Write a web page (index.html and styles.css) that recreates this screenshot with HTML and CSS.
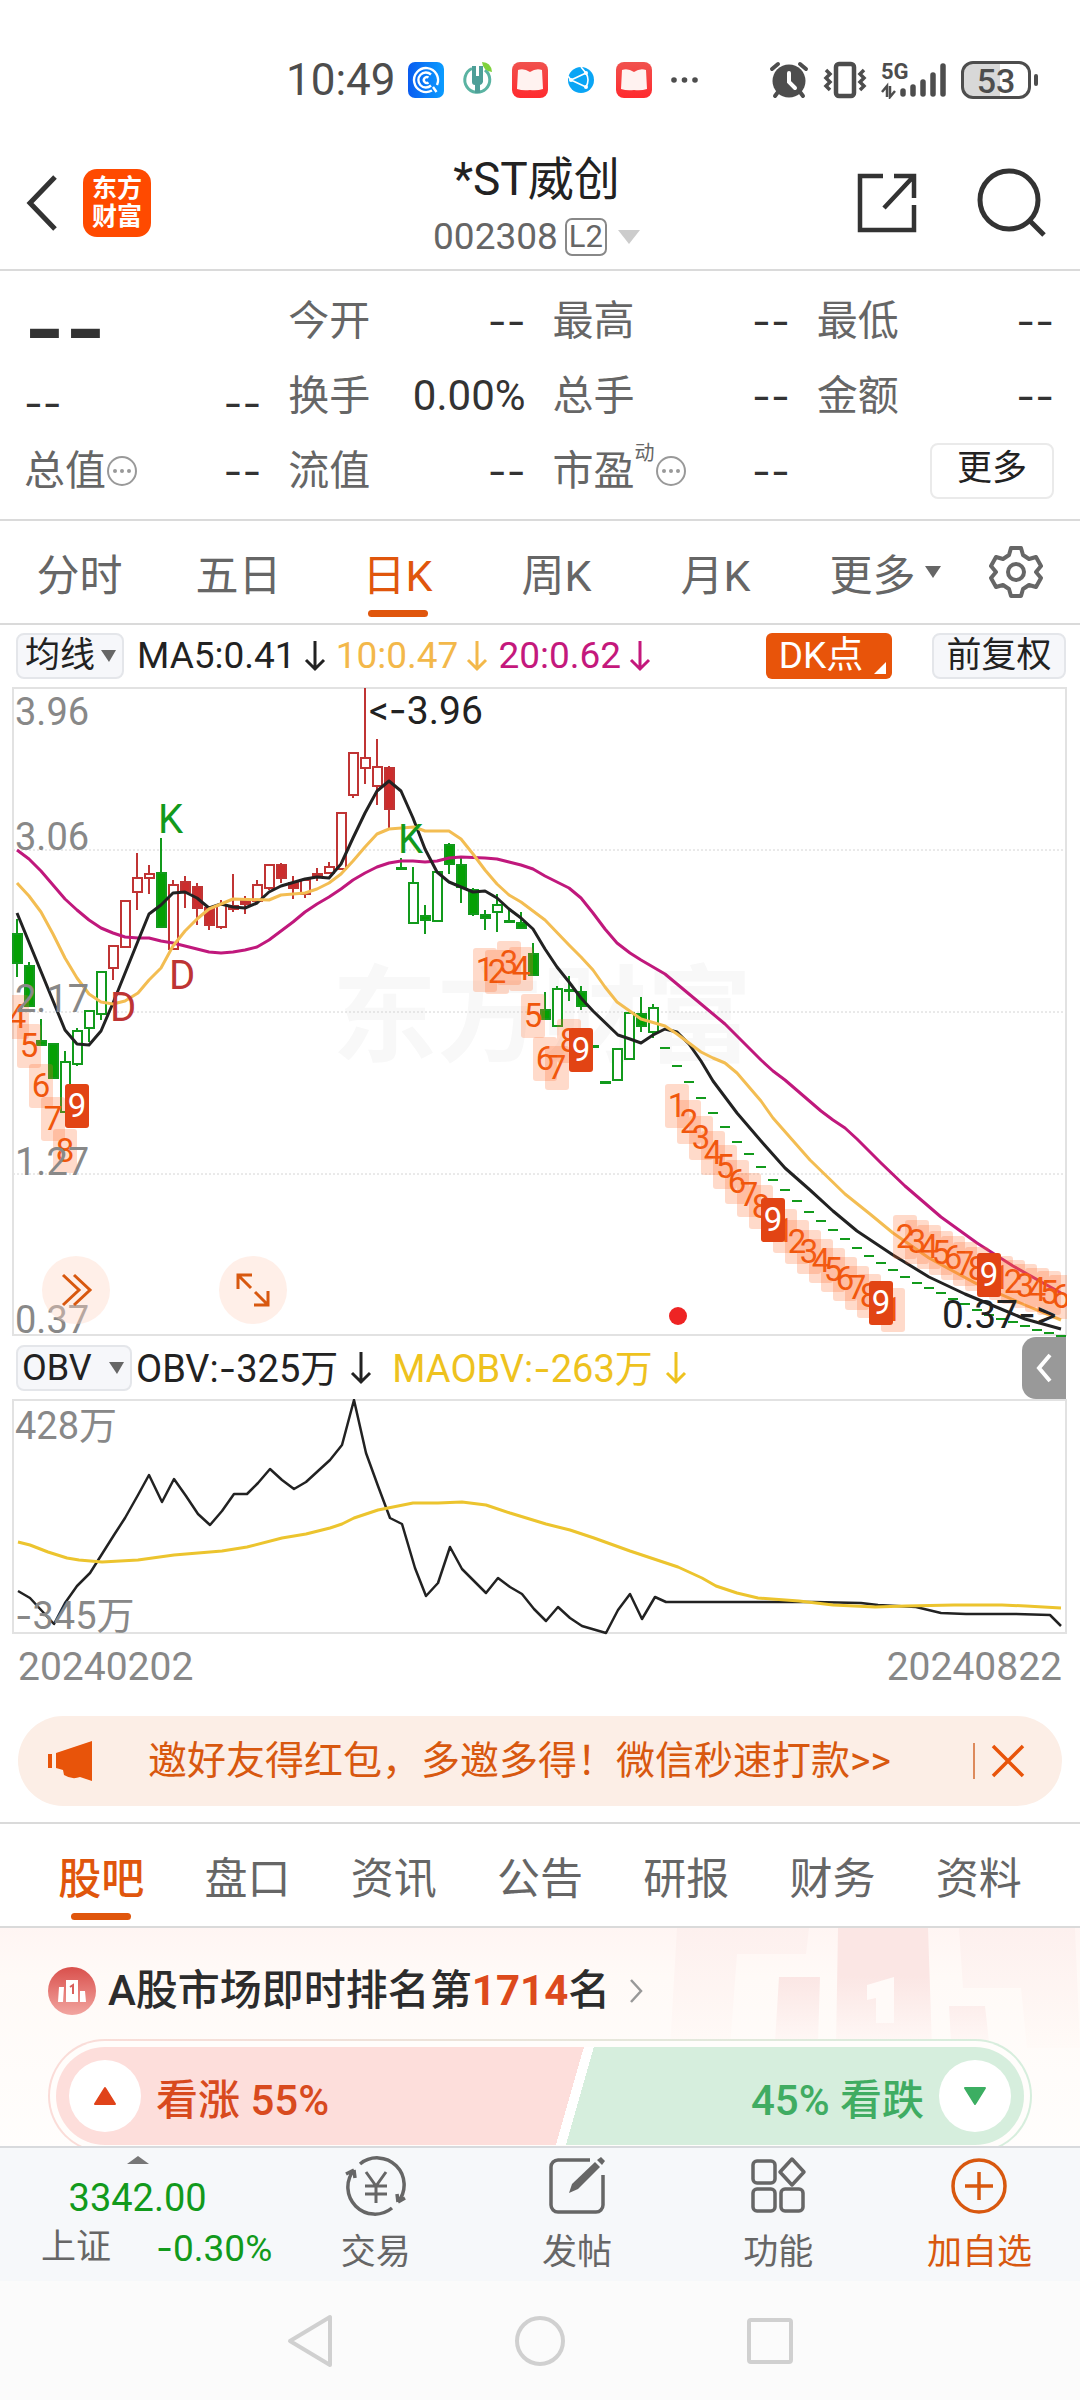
FILE: index.html
```html
<!DOCTYPE html>
<html lang="zh-CN">
<head>
<meta charset="utf-8">
<meta name="viewport" content="width=device-width, initial-scale=1">
<title>*ST威创 002308</title>
<link rel="stylesheet" href="styles.css">
</head>
<body>
<div class="app">
  <div class="status">
    <span class="status-time">10:49</span>
    <svg class="status-app" viewBox="0 0 52 36"><defs><linearGradient id="gb" x1="0" x2="1"><stop offset="0" stop-color="#0a5cf0"/><stop offset="1" stop-color="#0a9cff"/></linearGradient><linearGradient id="gr" x1="0" x2="0" y1="0" y2="1"><stop offset="0" stop-color="#f0524e"/><stop offset="1" stop-color="#ff2a2e"/></linearGradient></defs><rect x="8" width="36" height="36" rx="7" fill="url(#gb)"/><g fill="none" stroke="#fff" stroke-width="2.4"><path d="M32 28.5A12 12 0 1 1 37 23M33 25l3.500 5"/><path d="M31 12.500A7.500 7.500 0 1 0 31 23.500"/><path d="M28.500 15.500A3 3 0 1 0 28.500 20.500"/></g></svg>
    <svg class="status-app" viewBox="0 0 52 36"><g fill="none" stroke="#5ab3a2" stroke-width="3"><path d="M20 6.500A12.500 12.500 0 1 0 33 8"/></g><path d="M20 4h4v10h3V4h4v10v6q-1 3-3 3v8h-5v-8q-3 0-3-3z" fill="#4e9f98"/><path d="M30 0q9 0 10 10q-9-1-10-10z" fill="#7fd23c"/></svg>
    <svg class="status-app" viewBox="0 0 52 36"><rect x="8" width="36" height="36" rx="8" fill="url(#gr)"/><path d="M14 8q6-2 12 2q6-4 12-2l1 19q-6 2-13 1q-7 1-13-1z" fill="#fff2f0"/></svg>
    <svg class="status-app" viewBox="0 0 52 36"><circle cx="25" cy="18" r="13" fill="#0aa5f5"/><g stroke="#fff" stroke-width="1.600" fill="none"><path d="M15 18L30 11M15 18L30 25M30 11q4 7 0 14M30 11L25 5M15 18l-3-4"/></g><g fill="#fff"><circle cx="30" cy="11" r="2"/><circle cx="15" cy="18" r="2"/><circle cx="30" cy="25" r="2"/></g></svg>
    <svg class="status-app" viewBox="0 0 52 36"><rect x="8" width="36" height="36" rx="8" fill="url(#gr)"/><path d="M14 8q6-2 12 2q6-4 12-2l1 19q-6 2-13 1q-7 1-13-1z" fill="#fff2f0"/></svg>
    <svg class="status-app" viewBox="0 0 52 36" fill="#4d4d4d"><circle cx="14" cy="18" r="2.800"/><circle cx="24.500" cy="18" r="2.800"/><circle cx="35" cy="18" r="2.800"/></svg>
    <div class="status-right">
      <svg width="40" height="38" viewBox="0 0 40 38"><circle cx="20" cy="20" r="16.500" fill="#4d4d4d"/><g stroke="#4d4d4d" stroke-width="4" stroke-linecap="round"><path d="M3 8L9 3M37 8L31 3M9 31L6 35M31 31L34 35"/></g><path d="M20 12v9l6 6" fill="none" stroke="#fff" stroke-width="4" stroke-linecap="round"/></svg>
      <svg width="44" height="38" viewBox="0 0 44 38" fill="none" stroke="#4d4d4d"><rect x="13" y="3" width="18" height="32" rx="3" stroke-width="4.500"/><path d="M3 9l4 4l-4 4l4 4l-4 4l4 4M41 9l-4 4l4 4l-4 4l4 4l-4 4" stroke-width="3.500"/></svg>
      <div class="signal"><span class="signal-net">5G</span><svg width="66" height="38" viewBox="0 0 66 38"><g stroke="#4d4d4d" stroke-width="5.500" stroke-linecap="round"><path d="M22 30v3M32 26v7M42 21v12M52 14v19M62 5v28"/></g><path d="M1 31l5-6v11M9 25v11l5-6" fill="none" stroke="#4d4d4d" stroke-width="2.500"/></svg></div>
      <div class="battery"><span>53</span></div>
    </div>
  </div>

  <main class="page">
    <header class="top">
      <div class="top-left">
        <button class="icon-btn" aria-label="返回"><svg width="34" height="60" viewBox="0 0 34 60"><path d="M30 4L5 30L30 56" fill="none" stroke="#333" stroke-width="5"/></svg></button>
        <div class="logo"><span>东方</span><span>财富</span></div>
      </div>
      <div class="top-title">
        <h1>*ST威创</h1>
        <div class="code"><span>002308</span><span class="level">L2</span><svg width="22" height="14" viewBox="0 0 22 14"><path d="M0 0h22L11 14z" fill="#ccc"/></svg></div>
      </div>
      <div class="top-right">
        <button class="icon-btn" aria-label="分享"><svg width="62" height="62" viewBox="0 0 62 62" fill="none" stroke="#333" stroke-width="4.500"><path d="M27 4H4v54h54V33M38 4h20v22M57 5L28 36"/></svg></button>
        <button class="icon-btn" aria-label="搜索"><svg width="72" height="72" viewBox="0 0 72 72" fill="none" stroke="#333" stroke-width="5"><circle cx="33" cy="33" r="29"/><path d="M54 54L68 68"/></svg></button>
      </div>
    </header>

    <section class="quote">
      <div class="quote-last">
        <strong class="dash dash-big">--</strong>
        <div class="cell"><span class="dash">--</span><span class="dash">--</span></div>
      </div>
      <div class="cell"><span>今开</span><span class="dash">--</span></div>
      <div class="cell"><span>最高</span><span class="dash">--</span></div>
      <div class="cell"><span>最低</span><span class="dash">--</span></div>
      <div class="cell"><span>换手</span><span class="value">0.00%</span></div>
      <div class="cell"><span>总手</span><span class="dash">--</span></div>
      <div class="cell"><span>金额</span><span class="dash">--</span></div>
      <div class="cell"><span class="with-info">总值<button class="icon-btn" aria-label="说明"><svg width="32" height="32" viewBox="0 0 32 32"><circle cx="16" cy="16" r="14" fill="none" stroke="#999" stroke-width="2"/><g fill="#999"><circle cx="9" cy="16" r="2"/><circle cx="16" cy="16" r="2"/><circle cx="23" cy="16" r="2"/></g></svg></button></span><span class="dash">--</span></div>
      <div class="cell"><span>流值</span><span class="dash">--</span></div>
      <div class="cell"><span class="with-info">市盈<sup>动</sup><button class="icon-btn" aria-label="说明"><svg width="32" height="32" viewBox="0 0 32 32"><circle cx="16" cy="16" r="14" fill="none" stroke="#999" stroke-width="2"/><g fill="#999"><circle cx="9" cy="16" r="2"/><circle cx="16" cy="16" r="2"/><circle cx="23" cy="16" r="2"/></g></svg></button></span><span class="dash">--</span></div>
      <div class="cell cell-more"><button class="more">更多</button></div>
    </section>

    <nav class="periods">
      <button class="tab">分时</button>
      <button class="tab">五日</button>
      <button class="tab active">日K</button>
      <button class="tab">周K</button>
      <button class="tab">月K</button>
      <button class="tab tab-more">更多<svg width="16" height="12" viewBox="0 0 16 12"><path d="M0 0h16L8 12z" fill="#666"/></svg></button>
      <button class="icon-btn" aria-label="设置"><svg width="54" height="54" viewBox="0 0 54 54" fill="none" stroke="#666" stroke-width="4"><path d="M22 3h10l2 7l6 4l7-2l5 9l-5 6l5 6l-5 9l-7-2l-6 4l-2 7H22l-2-7l-6-4l-7 2l-5-9l5-6l-5-6l5-9l7 2l6-4z" stroke-linejoin="round"/><circle cx="27" cy="27" r="8"/></svg></button>
    </nav>

    <div class="legend">
      <div class="picker picker-ma"><select aria-label="主图指标"><option>均线</option></select><svg width="15" height="12" viewBox="0 0 15 12"><path d="M0 0h15L8 12z" fill="#666"/></svg></div>
      <span class="read ma">MA5:0.41<svg width="22" height="32" viewBox="0 0 22 32"><path d="M11 1v28M2 20l9 9l9-9"/></svg></span>
      <span class="read ma ma10">10:0.47<svg width="22" height="32" viewBox="0 0 22 32"><path d="M11 1v28M2 20l9 9l9-9"/></svg></span>
      <span class="read ma ma20">20:0.62<svg width="22" height="32" viewBox="0 0 22 32"><path d="M11 1v28M2 20l9 9l9-9"/></svg></span>
      <button class="dk">DK点<svg width="12" height="12" viewBox="0 0 12 12"><path d="M12 0v12H0z" fill="#fff"/></svg></button>
      <button class="chip">前复权</button>
    </div>

    <div class="chart">
      <svg class="plot" viewBox="0 686 1080 650">
        <defs><clipPath id="area"><rect x="12" y="686" width="1055" height="650"/></clipPath></defs>
        <text class="watermark" x="332" y="1052">东方财富</text>
        <g class="grid"><path d="M13 849H1066M13 1011H1066M13 1173H1066"/></g>
        <rect class="frame" x="13" y="687" width="1053" height="647"/>
        <g clip-path="url(#area)">
          <g id="candles"></g>
          <polyline class="line l20" points="17,849 29,858 41,870 53,884 65,898 77,909 89,919 101,927 113,932 125,936 138,937 149,937 161,940 173,942 185,945 197,948 209,951 221,952 233,951 245,949 257,946 269,939 281,930 293,921 305,911 317,903 329,896 341,888 353,879 365,872 377,866 389,862 401,860 413,860 425,861 437,860 449,857 461,856 485,857 497,858 509,861 521,864 533,868 545,875 557,881 569,887 581,897 593,912 605,928 617,942 630,952 641,959 665,973 677,983 701,1003 725,1023 761,1059 773,1070 785,1079 821,1110 833,1119 845,1127 857,1138 881,1162 905,1185 941,1216 977,1242 1013,1265 1061,1292"/>
          <polyline class="line l5" points="17,912 65,1029 77,1043 89,1044 101,1030 113,1002 138,940 149,913 161,904 173,892 185,891 197,897 209,907 221,903 233,906 245,907 257,902 269,891 281,885 305,878 317,876 329,877 341,863 353,837 365,812 377,790 389,780 401,790 413,817 425,848 437,871 449,881 461,886 473,891 485,890 497,897 509,908 521,917 533,928 545,948 557,966 569,981 581,997 593,1010 618,1034 630,1038 641,1042 653,1034 665,1028 677,1031 689,1043 701,1060 713,1080 737,1112 761,1140 785,1167 810,1189 833,1210 857,1230 893,1254 929,1276 965,1293 1001,1308 1025,1318 1061,1328"/>
          <polyline class="line l10" points="17,882 29,895 41,911 53,933 65,957 77,977 89,993 101,1001 113,1003 125,1000 138,992 149,979 161,967 173,945 185,930 197,918 209,908 221,903 233,898 269,899 281,894 305,892 317,888 329,882 341,873 353,860 365,846 377,833 389,828 414,826 425,830 449,830 461,838 473,853 485,869 497,883 509,894 521,901 533,910 545,919 569,944 581,956 593,969 605,986 617,1001 641,1018 665,1025 677,1033 701,1051 713,1057 725,1062 737,1072 761,1100 773,1117 810,1159 845,1193 870,1213 893,1232 929,1257 977,1283 1025,1304 1061,1319"/>
          <g id="counts"></g>
        </g>
        <g class="mark buy"><text x="158" y="832">K</text><text x="398" y="852">K</text></g>
        <g class="mark sell"><text x="169" y="988">D</text><text x="110" y="1020">D</text></g>
        <g class="axis"><text x="15" y="724">3.96</text><text x="15" y="849">3.06</text><text x="15" y="1011">2.17</text><text x="15" y="1174">1.27</text><text x="15" y="1332">0.37</text></g>
        <text class="note" x="369" y="723">&lt;<tspan class="wide">-</tspan>3.96</text>
        <text class="note" x="942" y="1327">0.37<tspan class="wide">-</tspan>&gt;</text>
        <circle cx="678" cy="1315" r="9" fill="#ee2424"/>
      </svg>
      <button class="float float-next" aria-label="快进"><svg width="34" height="36" viewBox="0 0 34 36"><path d="M4 3l16 15L4 33M15 3l16 15L15 33"/></svg></button>
      <button class="float float-full" aria-label="全屏"><svg width="36" height="36" viewBox="0 0 36 36"><path d="M3 17V3h14M3 3l13 13M33 19v14H19M33 33L20 20"/></svg></button>
    </div>

    <div class="legend">
      <div class="picker picker-obv"><select aria-label="副图指标"><option>OBV</option></select><svg width="15" height="12" viewBox="0 0 15 12"><path d="M0 0h15L8 12z" fill="#666"/></svg></div>
      <span class="read obv"><span>OBV:<span class="wide">-</span>325万</span><svg width="22" height="34" viewBox="0 0 22 34"><path d="M11 1v30M2 22l9 9l9-9"/></svg></span>
      <span class="read maobv"><span>MAOBV:<span class="wide">-</span>263万</span><svg width="22" height="34" viewBox="0 0 22 34"><path d="M11 1v30M2 22l9 9l9-9"/></svg></span>
      <button class="drawer" aria-label="展开"><svg width="18" height="32" viewBox="0 0 18 32"><path d="M15 3L4 16L15 29" fill="none" stroke="#fff" stroke-width="4"/></svg></button>
    </div>

    <svg class="plot" viewBox="0 1398 1080 236">
      <rect class="frame" x="13" y="1399" width="1053" height="233"/>
      <polyline class="line thin l5" points="18,1590 30,1597 54,1623 65,1602 77,1585 90,1572 102,1553 114,1534 125,1517 138,1494 149,1474 162,1501 174,1478 186,1495 198,1513 210,1524 222,1510 234,1493 247,1493 258,1482 270,1468 282,1479 294,1488 306,1481 318,1470 330,1459 342,1444 354,1399 366,1452 378,1485 390,1517 402,1523 415,1567 426,1595 438,1582 450,1546 462,1568 474,1580 486,1592 498,1577 510,1586 522,1593 534,1608 546,1620 558,1606 570,1617 582,1625 606,1632 618,1609 630,1593 642,1618 655,1596 666,1601 813,1601 861,1602 878,1604 916,1606 941,1612 966,1613 1014,1613 1050,1614 1061,1625"/>
      <polyline class="line lobv" points="18,1541 30,1544 48,1551 67,1557 79,1559 102,1561 138,1559 174,1554 222,1550 247,1546 282,1537 306,1533 330,1527 342,1523 354,1517 378,1509 413,1502 438,1502 462,1501 486,1504 510,1512 546,1523 570,1529 594,1537 630,1550 678,1566 702,1577 716,1585 737,1592 758,1597 799,1600 833,1604 875,1606 906,1605 954,1604 1002,1604 1026,1605 1061,1607"/>
      <g class="axis"><text x="15" y="1438">428万</text><text x="15" y="1628"><tspan class="wide">-</tspan>345万</text></g>
    </svg>
    <div class="dates"><span>20240202</span><span>20240822</span></div>

    <div class="promo">
      <svg width="46" height="40" viewBox="0 0 46 40" fill="#e8540a"><path d="M0 13h4v14H0zM8 12L44 0v40L32 36q-8 3-16-2l-1-5l-7-2z"/></svg>
      <a href="#invite">邀好友得红包，多邀多得！微信秒速打款&gt;&gt;</a>
      <button class="icon-btn promo-close" aria-label="关闭"><svg width="34" height="34" viewBox="0 0 34 34"><path d="M2 2l30 30M32 2L2 32" stroke="#e8540a" stroke-width="3.500"/></svg></button>
    </div>

    <nav class="sections">
      <button class="tab active">股吧</button>
      <button class="tab">盘口</button>
      <button class="tab">资讯</button>
      <button class="tab">公告</button>
      <button class="tab">研报</button>
      <button class="tab">财务</button>
      <button class="tab">资料</button>
    </nav>

    <section class="forum">
      <svg class="podium" viewBox="0 0 410 120"><defs><linearGradient id="fade" x1="0" x2="0" y1="0" y2="1"><stop offset="0.400" stop-color="#fbe6e4"/><stop offset="1" stop-color="#fff9f7"/></linearGradient><linearGradient id="fade2" x1="0" x2="0" y1="0" y2="1"><stop offset="0" stop-color="#fdf0ee"/><stop offset="1" stop-color="#fffaf7"/></linearGradient></defs><path d="M7 0h132l-3 26H67l-7 94H0zM289 0h116l5 120h-53l-6-60h-58z" fill="url(#fade2)"/><path d="M109 49h41l-2 65h-43zM168 0h90l4 120h-96zM279 78h36l4 36h-38z" fill="url(#fade)"/><path d="M197 57l27-8v46h-18V70l-9 2z" fill="#fffaf8"/></svg>
      <a class="rank" href="#rank">
        <svg width="48" height="48" viewBox="0 0 48 48"><defs><linearGradient id="gi" x1="0" x2="0" y1="0" y2="1"><stop offset="0" stop-color="#d9504c"/><stop offset="1" stop-color="#f2a5a0"/></linearGradient></defs><circle cx="24" cy="24" r="24" fill="url(#gi)"/><path d="M10 35l1-15h5l-1 15zM18 35V13h12v22zM32 35V24h5l1 11z" fill="#fff"/><path d="M22 20l3-2v9" fill="none" stroke="#d9605c" stroke-width="2"/></svg>
        <span class="rank-text">A股市场即时排名第<b>1714</b>名</span>
        <svg width="16" height="26" viewBox="0 0 16 26"><path d="M3 2l10 11L3 24" fill="none" stroke="#999" stroke-width="2.500"/></svg>
      </a>
      <div class="vote">
        <div class="vote-bar">
          <button class="vote-up"><span class="vote-dot"><svg width="24" height="20" viewBox="0 0 24 20"><path d="M12 2L22 18H2z" fill="#e0431a" stroke="#e0431a" stroke-width="2" stroke-linejoin="round"/></svg></span>看涨 55%</button>
          <button class="vote-down">45% 看跌<span class="vote-dot"><svg width="24" height="20" viewBox="0 0 24 20"><path d="M12 18L22 2H2z" fill="#3cae62" stroke="#3cae62" stroke-width="2" stroke-linejoin="round"/></svg></span></button>
        </div>
      </div>
    </section>
  </main>

  <footer class="dock">
    <a class="index" href="#index">
      <svg width="22" height="8" viewBox="0 0 22 8"><path d="M0 8L11 0l11 8z" fill="#777"/></svg>
      <span class="index-value">3342.00</span>
      <span class="index-row"><span>上证</span><span class="index-change"><span class="wide">-</span>0.30%</span></span>
    </a>
    <button class="dock-item"><svg width="66" height="60" viewBox="0 0 66 60" fill="none" stroke="#666" stroke-width="3.500"><path d="M17 8A27 27 0 0 1 55 46M49 52A27 27 0 0 1 11 14M11 14L3 18M11 14l1 8M55 46l7-4M55 46l-1-8"/><path d="M23 16l10 14l10-14M22 30h22M22 38h22M33 30v17" stroke-width="3"/></svg>交易</button>
    <button class="dock-item"><svg width="60" height="60" viewBox="0 0 60 60" fill="none" stroke="#666" stroke-width="3.500"><path d="M43 4H11a7 7 0 0 0-7 7v38a7 7 0 0 0 7 7h38a7 7 0 0 0 7-7V19"/><path d="M22 37l3-9L48 6l5 5L31 33z" fill="#666" stroke="none"/><path d="M50 4l5 5l3-4l-4-4z" fill="#666" stroke="none"/></svg>发帖</button>
    <button class="dock-item"><svg width="60" height="60" viewBox="0 0 60 60" fill="none" stroke="#666" stroke-width="3.500"><rect x="5" y="5" width="22" height="22" rx="4"/><rect x="5" y="33" width="22" height="22" rx="4"/><rect x="33" y="33" width="22" height="22" rx="4"/><path d="M44 3l12 13l-12 13l-12-13z" stroke-linejoin="round"/></svg>功能</button>
    <button class="dock-item accent"><svg width="60" height="60" viewBox="0 0 60 60" fill="none" stroke="#d8580f" stroke-width="3.500"><circle cx="30" cy="30" r="26"/><path d="M16 30h28M30 16v28"/></svg>加自选</button>
  </footer>
  <div class="system">
    <button class="icon-btn" aria-label="返回"><svg width="52" height="56" viewBox="0 0 52 56"><path d="M46 4v48L6 28z"/></svg></button>
    <button class="icon-btn" aria-label="主屏幕"><svg width="52" height="52" viewBox="0 0 52 52"><circle cx="26" cy="26" r="23"/></svg></button>
    <button class="icon-btn" aria-label="最近任务"><svg width="52" height="52" viewBox="0 0 52 52"><rect x="5" y="5" width="42" height="42" rx="2"/></svg></button>
  </div>
</div>
<script src="chart.js"></script>
</body>
</html>
```
FILE: styles.css
```css
* { box-sizing: border-box; }
body { margin: 0; background: #fff; color: #333; font-family: Roboto, "Noto Sans CJK SC", sans-serif; }
button, select { font: inherit; color: inherit; border: 0; padding: 0; margin: 0; background: none; }
a { color: inherit; text-decoration: none; }
svg { display: block; flex: none; }
h1 { margin: 0; font-weight: 400; }

.app { height: 100vh; display: flex; flex-direction: column; overflow: hidden; }
.page { flex: 1; min-height: 0; overflow-y: auto; scrollbar-width: none; }
.icon-btn { display: flex; align-items: center; justify-content: center; }
.dash, .wide { font-family: Inter, sans-serif; }

.status { flex: none; height: 110px; padding: 50px 49px 0 286px; display: flex; align-items: center; color: #4d4d4d; }
.status-time { font-size: 44px; line-height: 60px; width: 114px; }
.status-app { width: 52px; height: 36px; }
.status-right { margin-left: auto; display: flex; align-items: center; gap: 14px; }
.signal { position: relative; }
.signal-net { position: absolute; left: 0; top: 0; font-size: 22px; line-height: 22px; font-weight: 700; }
.battery { position: relative; width: 70px; height: 38px; border: 3px solid #4d4d4d; border-radius: 12px; background: linear-gradient(90deg, #d8d8d8 56%, #fff 56%); font-size: 34px; line-height: 34px; font-weight: 500; text-align: center; }
.battery::after { content: ""; position: absolute; right: -10px; top: 10px; width: 4px; height: 12px; border-radius: 2px; background: #4d4d4d; }

.top { height: 161px; padding: 0 32px 0 25px; border-bottom: 2px solid #dadada; display: grid; grid-template-columns: 1fr auto 1fr; align-items: center; }
.top-left { display: flex; align-items: center; gap: 24px; padding-top: 26px; }
.logo { width: 68px; height: 68px; border-radius: 14px; background: #ff4a00; color: #fff; font-size: 25px; line-height: 28px; font-weight: 700; display: flex; flex-direction: column; align-items: center; justify-content: center; }
.top-title { padding-top: 30px; text-align: center; color: #222; }
.top-title h1 { font-size: 46px; line-height: 64px; }
.code { display: flex; align-items: center; justify-content: center; gap: 7px; font-size: 37px; line-height: 52px; color: #666; }
.level { border: 2px solid #888; border-radius: 7px; font-size: 31px; line-height: 34px; padding: 0 2px; }
.code svg { margin-left: 4px; }
.top-right { display: flex; align-items: center; justify-content: flex-end; gap: 58px; padding-top: 26px; }

.quote { padding: 12px 26px 11px 24px; border-bottom: 2px solid #dadada; display: grid; grid-template-columns: repeat(4, 1fr); grid-template-rows: repeat(3, 75px); column-gap: 27px; font-size: 41px; line-height: 60px; color: #666; }
.quote-last { grid-row: span 2; display: flex; flex-direction: column; justify-content: space-between; color: #333; }
.quote-last .cell { height: 60px; }
.dash-big { font-size: 88px; line-height: 90px; font-weight: 600; }
.cell { display: flex; align-items: center; justify-content: space-between; }
.cell .dash, .value { color: #333; }
.value { font-size: 42px; }
.with-info { display: flex; align-items: center; }
.with-info sup { align-self: flex-start; font-size: 20px; line-height: 24px; }
.cell-more { justify-content: flex-end; }
.more { width: 124px; height: 56px; border: 2px solid #eaeaea; border-radius: 8px; font-size: 35px; line-height: 48px; padding-bottom: 4px; color: #222; }

.periods { height: 104px; padding-right: 23px; border-bottom: 2px solid #dadada; display: grid; grid-template-columns: repeat(5, 159fr) 180fr 82fr; }
.tab { position: relative; display: flex; align-items: center; justify-content: center; gap: 9px; font-size: 43px; color: #666; }
.tab.active { color: #e0560c; }
.tab.active::after { content: ""; position: absolute; left: 50%; bottom: 6px; width: 60px; height: 7px; margin-left: -30px; border-radius: 4px; background: #e0560c; }
.sections .tab.active { font-weight: 500; }

.legend { height: 62px; padding: 0 14px 0 16px; display: flex; align-items: center; color: #222; }
.picker { position: relative; height: 46px; margin-right: 13px; }
.picker select { appearance: none; width: 100%; height: 46px; padding-left: 7px; border: 2px solid #e4e6ea; border-radius: 8px; background: #f6f7fa; font-size: 35px; line-height: 42px; }
.picker svg { position: absolute; right: 8px; top: 17px; pointer-events: none; }
.picker-ma { width: 108px; }
.picker-obv { width: 116px; margin-right: 4px; }
.picker-obv select { padding-left: 4px; font-size: 36px; }
.read { display: flex; align-items: center; gap: 12px; margin-right: 12px; font-size: 38px; line-height: 48px; white-space: nowrap; }
.read svg { fill: none; stroke: currentColor; stroke-width: 3; }
.ma { gap: 8px; margin-right: 10px; font-size: 37px; }
.ma10 { color: #f3b84a; }
.ma20 { color: #c4187c; }
.obv { margin-right: 20px; }
.maobv { color: #eec21e; }
.dk { position: relative; margin-left: auto; width: 126px; height: 46px; padding-right: 16px; border-radius: 6px; background: #e8540a; color: #fff; font-size: 37px; line-height: 46px; }
.dk svg { position: absolute; right: 6px; bottom: 5px; }
.chip { margin-left: 40px; width: 134px; height: 46px; border: 2px solid #e4e6ea; border-radius: 8px; background: #f6f7fa; font-size: 35px; line-height: 42px; }
.drawer { align-self: stretch; width: 44px; margin-left: auto; border-radius: 14px 0 0 14px; background: #999; display: flex; align-items: center; justify-content: center; }

.chart { position: relative; }
.plot { width: 100%; height: auto; }
.plot text { font-size: 38px; }
.plot .watermark { font-size: 105px; font-weight: 700; fill: #f8f8f8; }
.grid path { stroke: #d4d4d4; stroke-width: 1; stroke-dasharray: 2 2; }
.frame { fill: none; stroke: #e2e2e2; stroke-width: 2; }
.line { fill: none; stroke-width: 3; stroke-linejoin: round; }
.thin { stroke-width: 2.500; }
.l5 { stroke: #222; }
.l10 { stroke: #f3bd52; }
.l20 { stroke: #c0187c; }
.lobv { stroke: #ecc42e; }
.axis { fill: #888; }
.plot .note { font-size: 39px; fill: #222; }
.plot .mark text { font-size: 40px; }
.buy { fill: #129a1c; }
.sell { fill: #bd3434; }
.up { stroke: #c03434; fill: #fff; stroke-width: 2; }
.up.solid { fill: #cc2c2c; }
.down { stroke: #129a1c; fill: #fff; stroke-width: 2; }
.down.solid { fill: #04a004; }
.plot .count text { font-size: 33px; text-anchor: middle; fill: #f0560c; }
.count rect { fill: #ff6a2c; fill-opacity: .25; }
.plot .count.nine text { fill: #fff; }
.count.nine rect { fill: #e24414; fill-opacity: 1; }
.float { position: absolute; bottom: 13px; width: 68px; height: 68px; border-radius: 50%; background: rgba(254, 215, 198, .4); display: flex; align-items: center; justify-content: center; }
.float svg { fill: none; stroke: #d8580f; stroke-width: 3; }
.float-next { left: 42px; }
.float-full { left: 219px; }

.dates { display: flex; justify-content: space-between; height: 81px; padding: 4px 18px 0; font-size: 39px; line-height: 56px; color: #888; }

.promo { height: 90px; margin: 0 18px 16px; padding: 0 37px 0 30px; border-radius: 45px; background: #fceee6; color: #d8580f; display: flex; align-items: center; font-size: 39px; line-height: 56px; }
.promo a { flex: 1; padding-left: 54px; white-space: nowrap; }
.promo-close { height: 36px; padding-left: 16px; border-left: 2px solid #dd8a5c; }

.sections { height: 106px; padding: 0 28px; border-top: 2px solid #dadada; border-bottom: 2px solid #dadada; display: grid; grid-template-columns: repeat(7, 1fr); }

.forum { position: relative; padding: 33px 48px 20px; background: linear-gradient(#fff5f3, #fffaf7 20%, #fffefd); }
.podium { position: absolute; right: 0; top: 0; width: 410px; height: 120px; }
.rank { position: relative; display: flex; align-items: center; gap: 12px; height: 60px; font-size: 42px; line-height: 60px; font-weight: 500; color: #2c2c2c; }
.rank b { color: #dd4a1c; }
.rank-text { margin-right: 6px; }
.vote { position: relative; margin-top: 18px; padding: 6px; border: 2px solid transparent; border-radius: 58px; background: linear-gradient(#fffdfb, #fffdfb) padding-box, linear-gradient(90deg, #fbdcd8, #d6eedd) border-box; }
.vote-bar { height: 98px; border-radius: 49px; overflow: hidden; display: flex; background: linear-gradient(106deg, #fddedb 53%, #fff 53%, #fff 54%, #d6eedd 54%); font-size: 42px; font-weight: 500; }
.vote-bar button { flex: 1; display: flex; align-items: center; gap: 15px; padding: 0 13px; }
.vote-bar .vote-up { color: #d84a1e; }
.vote-bar .vote-down { justify-content: flex-end; color: #40ac62; }
.vote-dot { width: 72px; height: 72px; border-radius: 50%; background: #fff; display: flex; align-items: center; justify-content: center; }

.dock { flex: none; height: 135px; border-top: 2px solid #d8dadd; background: #f6f8fa; display: grid; grid-template-columns: 275fr repeat(4, 201fr); color: #666; font-size: 35px; }
.index { display: flex; flex-direction: column; align-items: center; padding-top: 8px; }
.index-value { font-size: 38px; line-height: 60px; margin-top: 4px; color: #129a1c; }
.index-row { align-self: stretch; display: flex; justify-content: space-between; padding: 0 3px 0 41px; line-height: 40px; }
.index-change { font-size: 37px; color: #129a1c; }
.dock-item { display: flex; flex-direction: column; align-items: center; justify-content: flex-start; padding-top: 8px; line-height: 50px; gap: 12px; }
.dock-item svg { height: 60px; }
.accent { color: #d8580f; }

.system { flex: none; height: 119px; background: #fbfbfb; display: flex; align-items: center; justify-content: center; gap: 178px; }
.system svg { fill: none; stroke: #d0d0d0; stroke-width: 4; stroke-linejoin: round; }
```
FILE: chart.js
```js
const STEP = 12;
const START = 17;
const SVG = "http://www.w3.org/2000/svg";

// kind (u/d, capital = solid), body top, body bottom, wick top, wick bottom
const candles = [
  "D 933 962 918 976", "D 965 1005 961 1005", "D 1040 1044 1018 1044", "D 1043 1077 1043 1077",
  "d 1061 1111 1050 1111", "d 1030 1063 1027 1065", "d 1010 1027 1009 1041", "d 971 1013 970 1019",
  "u 945 967 944 979", "u 900 946 900 946", "u 877 891 852 909", "u 873 877 864 893",
  "D 872 926 837 926", "u 884 948 879 948", "U 881 891 875 907", "U 886 907 882 924",
  "U 907 924 905 929", "u 904 926 899 928", "u 905 908 873 911", "U 900 903 895 913",
  "u 884 900 879 901", "u 864 887 863 889", "U 864 877 862 882", "U 882 887 875 898",
  "u 879 893 877 897", "u 873 875 867 880", "u 866 872 861 873", "u 812 868 811 869",
  "u 752 794 751 797", "u 757 767 687 783", "u 766 785 738 804", "U 767 808 765 829",
  "D 867 868 857 868", "d 882 922 866 923", "D 915 919 904 933", "d 871 920 870 921",
  "D 844 863 842 873", "D 864 886 856 902", "D 889 913 887 915", "D 914 917 909 929",
  "d 904 911 893 931", "D 920 921 909 921", "D 922 927 911 927", "D 953 974 942 975",
  "D 1009 1018 991 1018", "d 988 1025 985 1026", "D 989 990 975 1000", "D 991 1005 985 1009",
  "D 1045 1045 1045 1045", "D 1081 1081 1081 1081", "d 1048 1079 1047 1080", "d 1012 1058 1011 1059",
  "D 1013 1025 996 1031", "d 1007 1031 1003 1037"
];
const flats = [1047, 1065, 1081, 1097, 1112, 1126, 1141, 1153, 1166, 1179, 1189, 1200, 1211, 1220, 1229, 1238, 1247,
  1255, 1262, 1269, 1276, 1282, 1287, 1292, 1298, 1303, 1309, 1314, 1318, 1321, 1325, 1329, 1332, 1335];

// first candle index, first number, centre heights
const runs = [
  [0, 4, [1016, 1045, 1085, 1118, 1150, 1105]],
  [39, 1, [969, 971, 962, 968, 1015, 1058, 1067, 1040, 1049]],
  [55, 1, [1105, 1121, 1137, 1152, 1166, 1181, 1194, 1206, 1219]],
  [64, 1, [1230, 1241, 1251, 1260, 1269, 1278, 1287, 1295, 1302]],
  [73, 1, [1309]],
  [74, 2, [1236, 1241, 1246, 1252, 1257, 1263, 1268, 1274]],
  [82, 1, [1277, 1281, 1285, 1289, 1292, 1296]]
];

function add(parent, name, attrs, text) {
  const el = document.createElementNS(SVG, name);
  for (const key in attrs) el.setAttribute(key, attrs[key]);
  if (text !== undefined) el.textContent = text;
  parent.appendChild(el);
  return el;
}

const candleLayer = document.getElementById("candles");
candles.forEach((row, i) => {
  const [kind, top, bottom, high, low] = row.split(" ").map((v, n) => (n ? Number(v) : v));
  const solid = kind === kind.toUpperCase();
  const cls = (kind.toLowerCase() === "u" ? "up" : "down") + (solid ? " solid" : "");
  const x = START + i * STEP;
  const g = add(candleLayer, "g", { class: cls });
  add(g, "path", { d: `M${x} ${high}V${low}` });
  add(g, "rect", { x: x - 4, y: top, width: 9, height: Math.max(bottom - top, 1) });
});
flats.forEach((y, n) => {
  const x = START + (candles.length + n) * STEP;
  add(candleLayer, "path", { class: "down", d: `M${x - 5} ${y}h10` });
});

const countLayer = document.getElementById("counts");
const items = runs.flatMap(([first, number, ys]) => ys.map((y, n) => ({ x: START + (first + n) * STEP, y, label: number + n })));
items.sort((a, b) => (a.label === 9) - (b.label === 9));
items.forEach(({ x, y, label }) => {
  const g = add(countLayer, "g", { class: label === 9 ? "count nine" : "count" });
  add(g, "rect", { x: x - 12, y: y - 22, width: 24, height: 44, rx: 3 });
  add(g, "text", { x, y: y + 11 }, label);
});
```
